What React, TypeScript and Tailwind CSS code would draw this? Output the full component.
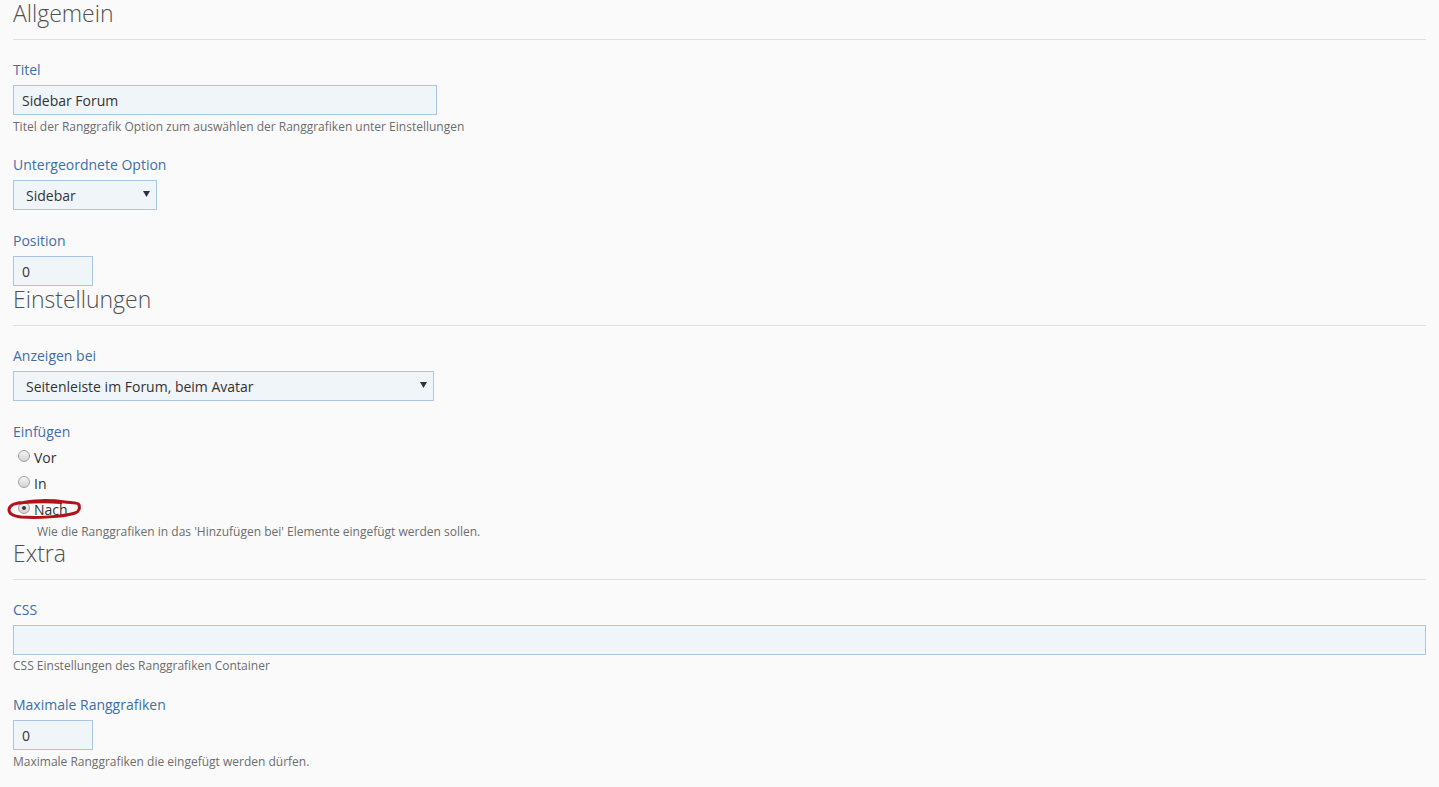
import React from "react";

const font = { fontFamily: '"Open Sans", "Noto Sans", sans-serif' };

function Heading({ children }: { children: React.ReactNode }) {
  return (
    <div className="h-[40px] border-b border-[#e0e0e0] text-[23px] font-light leading-[27px] text-[#505050]">
      {children}
    </div>
  );
}

function Label({ children, mt = "mt-[21px]" }: { children: React.ReactNode; mt?: string }) {
  return <div className={`${mt} h-[20px] text-[14px] leading-[20px] text-[#3e6eab]`}>{children}</div>;
}

function Help({ children, className = "mt-[4px]" }: { children: React.ReactNode; className?: string }) {
  return <div className={`h-[16px] text-[12px] leading-[16px] text-[#6d6d6d] ${className}`}>{children}</div>;
}

function Input({ value, className }: { value: string; className: string }) {
  return (
    <div
      className={`mt-[5px] flex h-[30px] items-center border border-[#a9c6e2] bg-[#f0f5fa] pl-[8px] text-[14px] text-[#333] ${className}`}
    >
      {value}
    </div>
  );
}

function Select({ value, className }: { value: string; className: string }) {
  return (
    <div
      className={`mt-[5px] flex h-[30px] items-center justify-between border border-[#a9c6e2] bg-[#f0f5fa] pl-[12px] pr-[6px] text-[14px] text-[#333] ${className}`}
    >
      <span>{value}</span>
      <svg width="7" height="6" viewBox="0 0 7 6" className="mb-[2px]">
        <path d="M0 0 H7 L3.5 6 Z" fill="#2b3440" />
      </svg>
    </div>
  );
}

function Radio({ label, checked }: { label: string; checked?: boolean }) {
  return (
    <div className="flex h-[26px] items-center pl-[5px] text-[14px] text-[#333]">
      <span className="relative mr-[4px] mb-[2px] inline-block h-[12px] w-[12px] rounded-full border border-[#a0a0a0] bg-gradient-to-b from-[#f4f4f4] to-[#d4d4d4]">
        {checked && (
          <span className="absolute left-[3px] top-[3px] h-[4px] w-[4px] rounded-full bg-[#3a3a3a]" />
        )}
      </span>
      <span>{label}</span>
    </div>
  );
}

export default function App() {
  return (
    <div className="min-h-[787px] bg-[#fafafa] px-[13px]" style={font}>
      <Heading>Allgemein</Heading>
      <Label mt="mt-[20px]">Titel</Label>
      <Input value="Sidebar Forum" className="w-[424px]" />
      <Help>Titel der Ranggrafik Option zum auswählen der Ranggrafiken unter Einstellungen</Help>
      <Label mt="mt-[20px]">Untergeordnete Option</Label>
      <Select value="Sidebar" className="w-[144px]" />
      <Label>Position</Label>
      <Input value="0" className="w-[80px]" />

      <Heading>Einstellungen</Heading>
      <Label mt="mt-[20px]">Anzeigen bei</Label>
      <Select value="Seitenleiste im Forum, beim Avatar" className="w-[421px]" />
      <Label>Einfügen</Label>
      <div className="mt-[2px]">
        <Radio label="Vor" />
        <Radio label="In" />
        <div className="relative">
          <Radio label="Nach" checked />
          <svg
            className="pointer-events-none absolute left-[-6px] top-[2px]"
            width="76"
            height="24"
            viewBox="0 0 76 24"
          >
            <path
              d="M14 5 C24 2 44 2 58 4 C66 5 72 5 72 7 C73 10 72 14 68 15 C56 19 30 20 14 19 C6 18 2 16 2 12 C2 8 7 5 16 4.5 C28 3.5 44 3.5 54 4.5"
              fill="none"
              stroke="#b0141a"
              strokeWidth="3"
              strokeLinecap="round"
            />
          </svg>
        </div>
      </div>
      <Help className="mt-[2px] pl-[24px]">
        Wie die Ranggrafiken in das 'Hinzufügen bei' Elemente eingefügt werden sollen.
      </Help>

      <Heading>Extra</Heading>
      <Label mt="mt-[20px]">CSS</Label>
      <Input value="" className="w-full" />
      <Help className="mt-[3px]">CSS Einstellungen des Ranggrafiken Container</Help>
      <Label>Maximale Ranggrafiken</Label>
      <Input value="0" className="w-[80px]" />
      <Help>Maximale Ranggrafiken die eingefügt werden dürfen.</Help>
    </div>
  );
}
